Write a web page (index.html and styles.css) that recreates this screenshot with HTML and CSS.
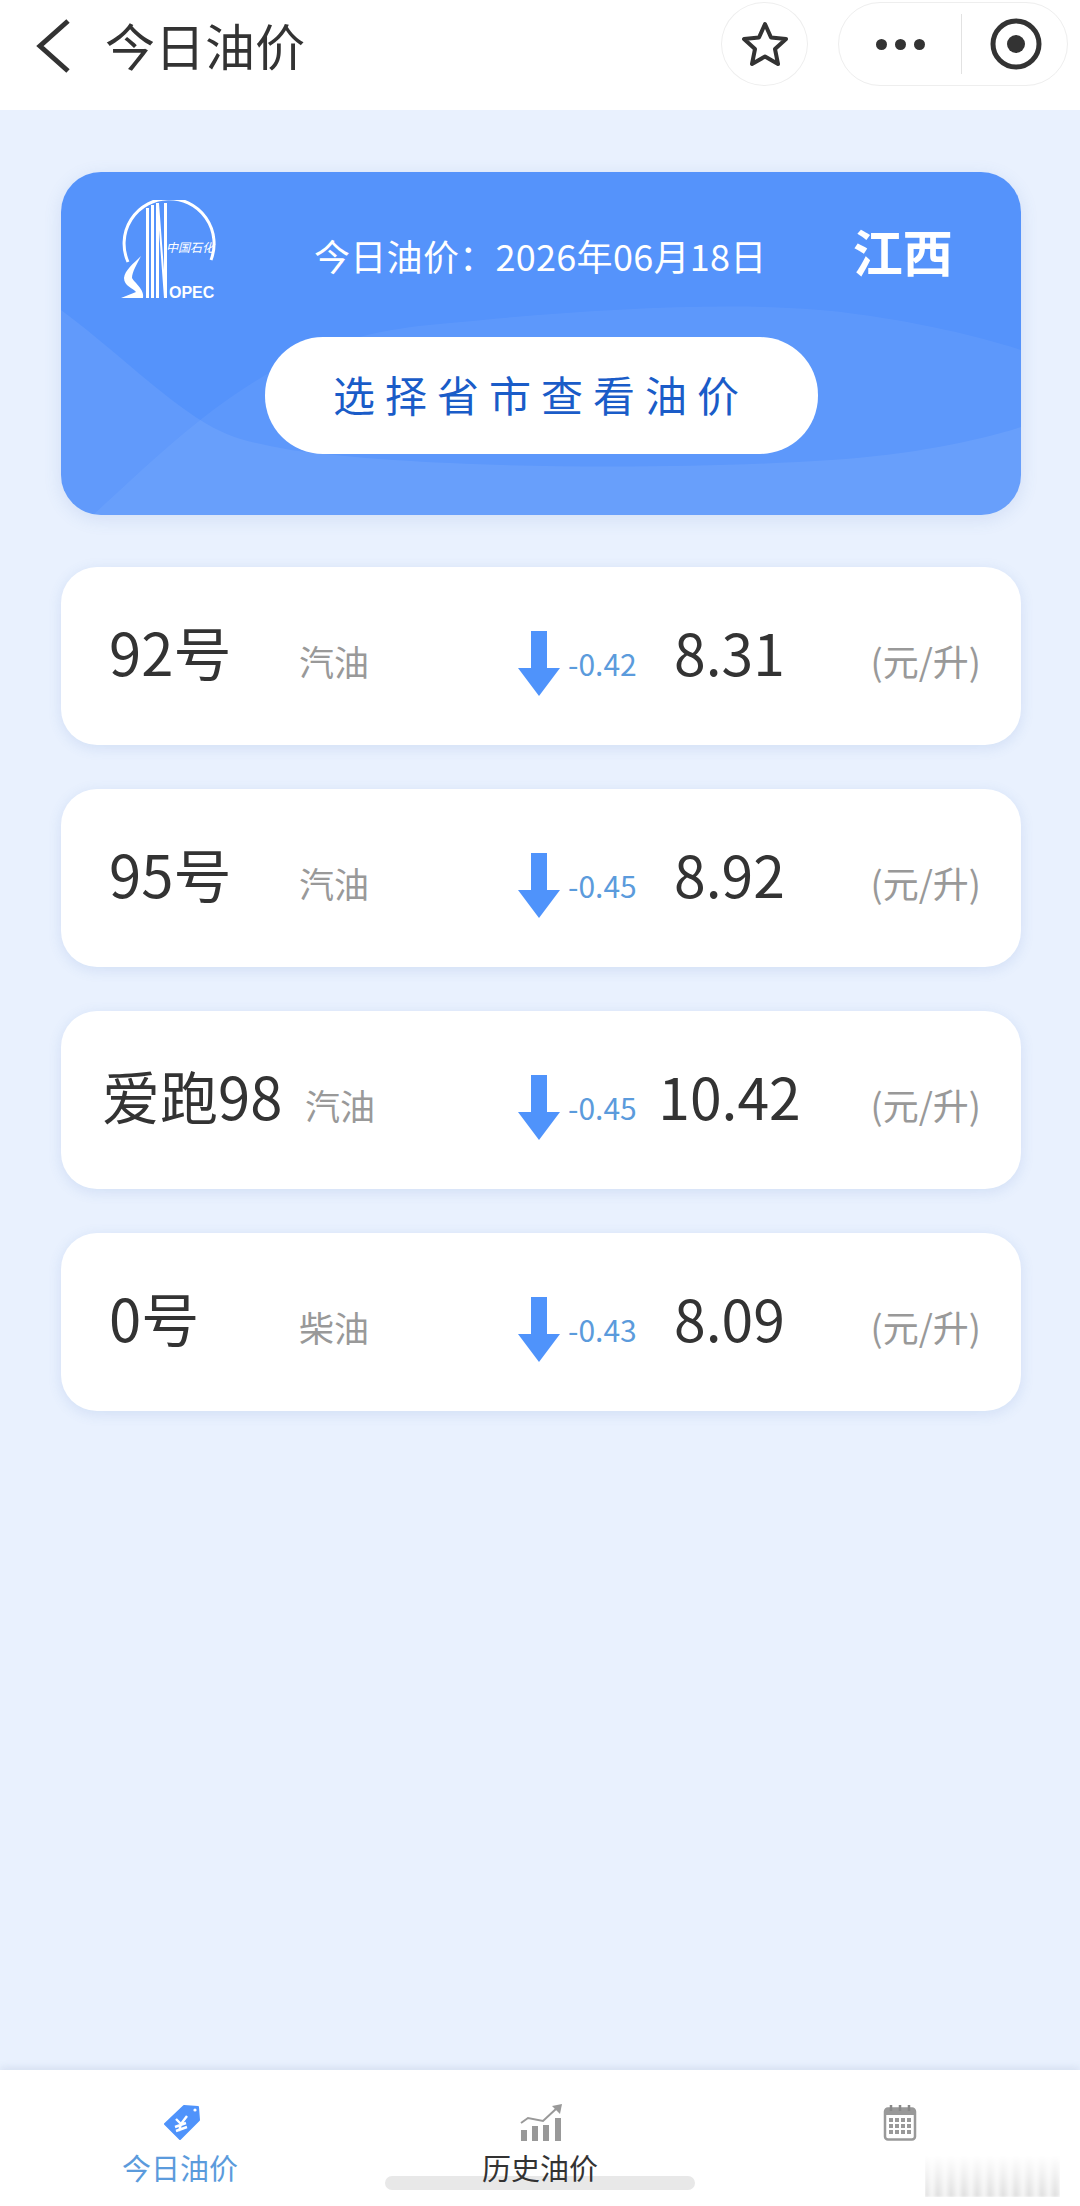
FILE: index.html
```html
<!DOCTYPE html>
<html lang="zh-CN">
<head>
    <meta charset="UTF-8">
    <meta name="viewport" content="width=device-width, initial-scale=1.0">
    <title>今日油价</title>
    <link rel="stylesheet" href="styles.css">
</head>
<body>
    <header class="topbar">
        <svg class="back-icon" viewBox="0 0 36 56"><path d="M33 3 L5 28 L33 53" /></svg>
        <h1 class="page-title">今日油价</h1>
        <div class="star-btn">
            <svg class="star-icon" viewBox="0 0 48 48"><path d="M24 4 L30 17.5 L45 19 L34 29 L37 44 L24 36.5 L11 44 L14 29 L3 19 L18 17.5 Z" /></svg>
        </div>
        <div class="capsule">
            <div class="capsule-dots"><span></span><span></span><span></span></div>
            <div class="capsule-line"></div>
            <svg class="target-icon" viewBox="0 0 56 56"><circle class="target-ring" cx="28" cy="28" r="23" /><circle class="target-dot" cx="28" cy="28" r="9" /></svg>
        </div>
    </header>

    <main class="content">
        <section class="hero">
            <svg class="hero-waves" viewBox="0 0 960 343" preserveAspectRatio="none">
                <path class="wave-a" d="M32 343 C90 290 160 220 240 185 C300 160 340 155 400 150 C520 138 680 128 780 140 C860 150 920 165 960 178 L960 343 Z" />
                <path class="wave-b" d="M0 138 C50 175 90 215 136 246 C170 268 190 270 230 278 C380 298 620 298 770 288 C850 283 920 268 960 255 L960 343 L0 343 Z" />
            </svg>
            <div class="hero-top">
                <svg class="logo" viewBox="0 0 100 104">
                    <path class="logo-ring" d="M9 62 A45 45 0 1 1 92 60" />
                    <path class="logo-fill" d="M27 8 h3 v90 h-3 Z M32 5 h3 v93 h-3 Z M37 3 h3 L45 70 V3 h3 V98 h-3 L40 30 V98 h-3 Z" />
                    <path class="logo-fill" d="M22 56 C14 64 6 70 5 78 C5 86 14 88 17 92 L2 98 L24 98 C26 90 15 82 13 78 C13 72 18 64 22 56 Z" />
                    <text class="logo-cn" x="47" y="52">中国石化</text>
                    <text class="logo-en" x="50" y="98">OPEC</text>
                </svg>
                <div class="hero-date">今日油价：2026年06月18日</div>
                <div class="hero-province">江西</div>
            </div>
            <div class="select-btn">选择省市查看油价</div>
        </section>

        <div class="price-row">
            <div class="fuel-name">92号</div>
            <div class="fuel-type">汽油</div>
            <svg class="down-arrow" viewBox="0 0 42 65"><path d="M13 0 H29 V37 H42 L21 65 L0 37 H13 Z" /></svg>
            <div class="fuel-change">-0.42</div>
            <div class="fuel-price">8.31</div>
            <div class="fuel-unit">(元/升)</div>
        </div>
        <div class="price-row">
            <div class="fuel-name">95号</div>
            <div class="fuel-type">汽油</div>
            <svg class="down-arrow" viewBox="0 0 42 65"><path d="M13 0 H29 V37 H42 L21 65 L0 37 H13 Z" /></svg>
            <div class="fuel-change">-0.45</div>
            <div class="fuel-price">8.92</div>
            <div class="fuel-unit">(元/升)</div>
        </div>
        <div class="price-row">
            <div class="fuel-name fuel-name-wide">爱跑98</div>
            <div class="fuel-type fuel-type-wide">汽油</div>
            <svg class="down-arrow" viewBox="0 0 42 65"><path d="M13 0 H29 V37 H42 L21 65 L0 37 H13 Z" /></svg>
            <div class="fuel-change">-0.45</div>
            <div class="fuel-price">10.42</div>
            <div class="fuel-unit">(元/升)</div>
        </div>
        <div class="price-row">
            <div class="fuel-name">0号</div>
            <div class="fuel-type">柴油</div>
            <svg class="down-arrow" viewBox="0 0 42 65"><path d="M13 0 H29 V37 H42 L21 65 L0 37 H13 Z" /></svg>
            <div class="fuel-change">-0.43</div>
            <div class="fuel-price">8.09</div>
            <div class="fuel-unit">(元/升)</div>
        </div>
    </main>

    <footer class="tabbar">
        <div class="tab tab-active">
            <svg class="tab-icon" viewBox="-2 0 40 40">
                <path class="tag-body" d="M3 21 L22 3 L36 4 L37 17 L18 36 Z" />
                <circle class="tag-hole" cx="33" cy="7" r="1.6" />
                <path class="tag-yen" d="M14 16 L19 21 L25 13 M19 21 L17 28 M13 24 L24 20 M14 28 L25 24" />
            </svg>
            <div class="tab-label">今日油价</div>
        </div>
        <div class="tab">
            <svg class="tab-icon" viewBox="-2 0 44 40">
                <path class="chart-bars" d="M1 27 h6 v11 h-6 Z M12 23 h6 v15 h-6 Z M23 22 h6 v16 h-6 Z M35 15 h6 v23 h-6 Z" />
                <path class="chart-line" d="M1 20 L8 15 L23 18 L37 5" />
                <path class="chart-bars" d="M32 3 L42 1 L40 11 Z" />
            </svg>
            <div class="tab-label tab-label-dark">历史油价</div>
        </div>
        <div class="tab">
            <svg class="tab-icon" viewBox="0 0 40 40">
                <rect class="cal-frame" x="5" y="5.5" width="30" height="31" rx="3" />
                <path class="cal-head" d="M5 8 Q5 5 8 5 H32 Q35 5 35 8 V12 H5 Z" />
                <path class="cal-rings" d="M11 2 V8 M20 2 V8 M29 2 V8" />
                <g class="cal-dots">
                    <rect x="9" y="15" width="4" height="4" /><rect x="15" y="15" width="4" height="4" /><rect x="21" y="15" width="4" height="4" /><rect x="27" y="15" width="4" height="4" />
                    <rect x="9" y="21" width="4" height="4" /><rect x="15" y="21" width="4" height="4" /><rect x="21" y="21" width="4" height="4" /><rect x="27" y="21" width="4" height="4" />
                    <rect x="9" y="27" width="4" height="4" /><rect x="15" y="27" width="4" height="4" /><rect x="21" y="27" width="4" height="4" /><rect x="27" y="27" width="4" height="4" />
                </g>
            </svg>
        </div>
        <div class="home-bar"></div>
        <div class="watermark"></div>
    </footer>
</body>
</html>
```

FILE: styles.css
```css
* {
    box-sizing: border-box;
}
body {
    font-family: "Noto Sans CJK SC", "Noto Sans", sans-serif;
    display: flex;
    flex-direction: column;
    width: 1080px;
    height: 2206px;
    margin: 0;
    background-color: #e9f1fe;
    color: #333;
    overflow: hidden;
}

/* top bar */
.topbar {
    display: flex;
    align-items: flex-start;
    height: 110px;
    padding: 2px 12px 0 35px;
    background: #fff;
}
.back-icon {
    width: 36px;
    height: 56px;
    margin-top: 16px;
    fill: none;
    stroke: #333;
    stroke-width: 5;
}
.page-title {
    flex: 1;
    margin: 0 0 0 34px;
    font-size: 50px;
    font-weight: 400;
    line-height: 84px;
}
.star-btn {
    display: flex;
    align-items: center;
    justify-content: center;
    width: 87px;
    height: 84px;
    border: 1px solid #eee;
    border-radius: 50%;
}
.star-icon {
    width: 48px;
    height: 48px;
    fill: none;
    stroke: #333;
    stroke-width: 4;
    stroke-linejoin: round;
}
.capsule {
    display: flex;
    align-items: center;
    width: 230px;
    height: 84px;
    margin-left: 30px;
    padding-left: 37px;
    border: 1px solid #eee;
    border-radius: 42px;
}
.capsule-dots {
    display: flex;
    gap: 8px;
}
.capsule-dots span {
    width: 11px;
    height: 11px;
    border-radius: 50%;
    background: #333;
}
.capsule-line {
    width: 1px;
    height: 60px;
    margin-left: 36px;
    background: #e2e2e2;
}
.target-icon {
    width: 56px;
    height: 56px;
    margin-left: 26px;
}
.target-ring {
    fill: none;
    stroke: #333;
    stroke-width: 5;
}
.target-dot {
    fill: #333;
}

/* main */
.content {
    flex: 1;
    padding: 62px 59px 0 61px;
}
.hero {
    position: relative;
    height: 343px;
    margin-bottom: 52px;
    padding-top: 28px;
    border-radius: 40px;
    background: #5593fb;
    box-shadow: 0 4px 18px rgba(70, 110, 190, 0.14);
    overflow: hidden;
}
.hero-waves {
    position: absolute;
    left: 0;
    top: 0;
    width: 100%;
    height: 100%;
}
.wave-a {
    fill: #fff;
    opacity: 0.05;
}
.wave-b {
    fill: #fff;
    opacity: 0.07;
}
.hero-top {
    position: relative;
    display: flex;
    align-items: flex-start;
    height: 100px;
    padding-left: 58px;
    color: #fff;
}
.logo {
    width: 100px;
    height: 104px;
    flex-shrink: 0;
}
.logo-ring {
    fill: none;
    stroke: #fff;
    stroke-width: 3;
}
.logo-fill {
    fill: #fff;
}
.logo-cn {
    fill: #fff;
    font-size: 12px;
    font-style: italic;
}
.logo-en {
    fill: #fff;
    font-family: "Liberation Sans Narrow", "Liberation Sans", sans-serif;
    font-size: 16px;
    font-weight: 700;
}
.hero-date {
    margin: 30px 0 0 95px;
    font-size: 36px;
    letter-spacing: 0.3px;
    line-height: 50px;
    white-space: nowrap;
}
.hero-province {
    margin: 20px 0 0 86px;
    font-size: 50px;
    font-weight: 700;
    line-height: 60px;
}
.select-btn {
    position: relative;
    width: 553px;
    height: 117px;
    margin: 37px auto 0;
    border-radius: 58px;
    background: #fff;
    color: #1a5cc8;
    font-size: 42px;
    letter-spacing: 10px;
    line-height: 113px;
    text-align: center;
}

/* price rows */
.price-row {
    display: grid;
    grid-template-columns: 189px 219px 50px 72px 176px 1fr;
    align-items: baseline;
    height: 178px;
    margin-bottom: 44px;
    padding: 42px 40px 0 48px;
    border-radius: 36px;
    background: #fff;
    box-shadow: 0 3px 14px rgba(70, 110, 190, 0.14);
}
.fuel-name {
    font-size: 58px;
    line-height: 84px;
    white-space: nowrap;
}
.fuel-name-wide {
    margin-left: -7px;
}
.fuel-type {
    margin-left: 1px;
    color: #999;
    font-size: 35px;
}
.fuel-type-wide {
    margin-left: 7px;
}
.down-arrow {
    align-self: start;
    width: 42px;
    height: 65px;
    margin: 22px 0 0 1px;
    fill: #4f93fb;
}
.fuel-change {
    margin-left: 1px;
    color: #5b9bdc;
    font-size: 30px;
    white-space: nowrap;
}
.fuel-price {
    margin-left: 5px;
    font-size: 57px;
    line-height: 84px;
    text-align: center;
}
.fuel-unit {
    color: #999;
    font-size: 36px;
    text-align: right;
    white-space: nowrap;
}

/* tab bar */
.tabbar {
    position: relative;
    display: grid;
    grid-template-columns: repeat(3, 1fr);
    height: 136px;
    padding-top: 33px;
    background: #fff;
    box-shadow: 0 -2px 8px rgba(60, 80, 120, 0.12);
}
.tab {
    display: flex;
    flex-direction: column;
    align-items: center;
}
.tab-icon {
    height: 40px;
}
.tab-label {
    position: relative;
    z-index: 1;
    margin-top: 3px;
    color: #5b9bdc;
    font-size: 29px;
    line-height: 42px;
}
.tab-label-dark {
    color: #333;
}
.tag-body {
    fill: #4f93fb;
    stroke: #4f93fb;
    stroke-width: 2;
    stroke-linejoin: round;
}
.tag-hole {
    fill: #fff;
}
.tag-yen {
    fill: none;
    stroke: #fff;
    stroke-width: 2.4;
}
.chart-bars {
    fill: #999;
}
.chart-line {
    fill: none;
    stroke: #999;
    stroke-width: 2;
}
.cal-frame {
    fill: #fff;
    stroke: #999;
    stroke-width: 2.5;
}
.cal-head {
    fill: #999;
}
.cal-rings {
    fill: none;
    stroke: #888;
    stroke-width: 2.5;
}
.cal-dots {
    fill: #999;
}
.home-bar {
    position: absolute;
    left: 385px;
    top: 106px;
    width: 310px;
    height: 14px;
    border-radius: 7px;
    background: #e8e8e8;
}
/* smeared watermark in the corner */
.watermark {
    position: absolute;
    left: 925px;
    top: 85px;
    width: 135px;
    height: 42px;
    background: repeating-linear-gradient(90deg, #ddd 0, #f6f6f6 7px, #ddd 13px);
    -webkit-mask-image: linear-gradient(180deg, transparent, #000);
    mask-image: linear-gradient(180deg, transparent, #000);
    filter: blur(1px);
}
```
